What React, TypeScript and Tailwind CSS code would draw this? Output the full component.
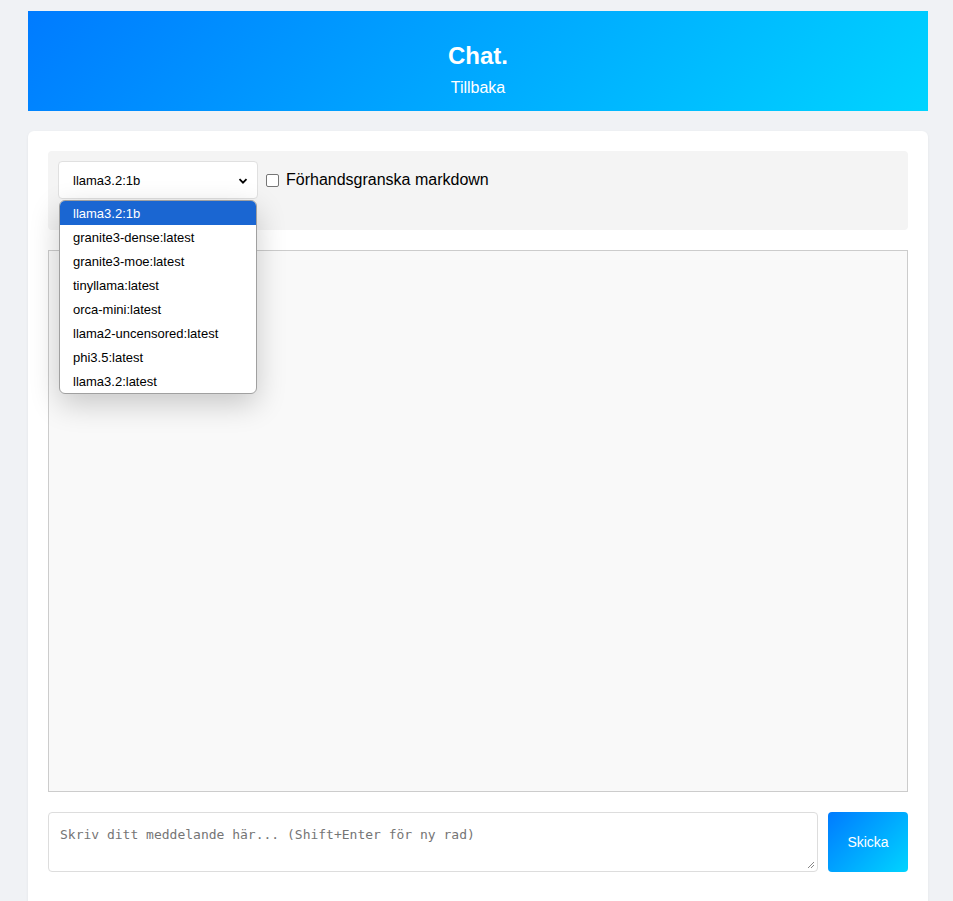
import React from 'react';

const models = [
    'llama3.2:1b',
    'granite3-dense:latest',
    'granite3-moe:latest',
    'tinyllama:latest',
    'orca-mini:latest',
    'llama2-uncensored:latest',
    'phi3.5:latest',
    'llama3.2:latest',
];

const App: React.FC = () => {
    return (
        <div className="min-h-[901px] bg-[#f0f2f5] pt-[11px] font-['Liberation_Sans',Arial,sans-serif] text-black">
            <div className="ml-[28px] w-[900px]">
                {/* Header */}
                <header className="h-[100px] bg-[linear-gradient(135deg,#007bff,#00d4ff)] pt-[31px] text-center text-white">
                    <h1 className="text-[24px] font-bold leading-[28px]">Chat.</h1>
                    <p className="mt-[8px] text-[16px] leading-[19px]">Tillbaka</p>
                </header>

                {/* Chat card */}
                <main className="mt-[20px] h-[790px] rounded-t-[6px] bg-white p-[20px] shadow-[0_1px_3px_rgba(0,0,0,0.06)]">
                    {/* Controls */}
                    <div className="relative h-[79px] rounded-[4px] bg-[#f4f4f4] p-[10px]">
                        <div className="flex items-center gap-[8px]">
                            <div className="flex h-[38px] w-[200px] items-center justify-between rounded-[4px] border border-[#e0e0e0] bg-white pl-[14px] pr-[9px] pt-[1px] text-[13px]">
                                <span>llama3.2:1b</span>
                                <svg width="10" height="10" viewBox="0 0 10 10">
                                    <path d="M1.5 3.2 L5 6.7 L8.5 3.2" fill="none" stroke="#000" strokeWidth="1.8" />
                                </svg>
                            </div>
                            <label className="flex items-center gap-[7px] text-[16px]">
                                <span className="h-[13px] w-[13px] rounded-[2px] border border-[#767676] bg-white" />
                                Förhandsgranska markdown
                            </label>
                        </div>

                        {/* Open select list */}
                        <ul className="absolute left-[11px] top-[49px] z-10 w-[198px] overflow-hidden rounded-[6px] border border-[#a0a0a0] bg-white text-[13px] shadow-[0_10px_30px_rgba(0,0,0,0.2)]">
                            {models.map((m, i) => (
                                <li
                                    key={m}
                                    className={`h-[24px] pl-[13px] pt-[1px] leading-[24px] ${i === 0 ? 'bg-[#1a66d2] text-white' : 'text-black'}`}
                                >
                                    {m}
                                </li>
                            ))}
                        </ul>
                    </div>

                    {/* Messages */}
                    <div className="mt-[20px] h-[542px] border border-[#cccccc] bg-[#f9f9f9]" />

                    {/* Input row */}
                    <div className="mt-[20px] flex gap-[10px]">
                        <div className="relative h-[60px] flex-1 rounded-[4px] border border-[#dddddd] bg-white px-[11px] pt-[12px] font-['DejaVu_Sans_Mono',monospace] text-[13px] text-[#757575]">
                            Skriv ditt meddelande här... (Shift+Enter för ny rad)
                            <svg className="absolute bottom-[2px] right-[2px]" width="9" height="9" viewBox="0 0 9 9">
                                <path d="M8 2 L2 8 M8 5 L5 8" stroke="#888" strokeWidth="1" />
                            </svg>
                        </div>
                        <button className="h-[60px] w-[80px] rounded-[4px] bg-[linear-gradient(135deg,#007bff,#00d4ff)] text-[14px] text-white">
                            Skicka
                        </button>
                    </div>
                </main>
            </div>
        </div>
    );
};

export default App;
